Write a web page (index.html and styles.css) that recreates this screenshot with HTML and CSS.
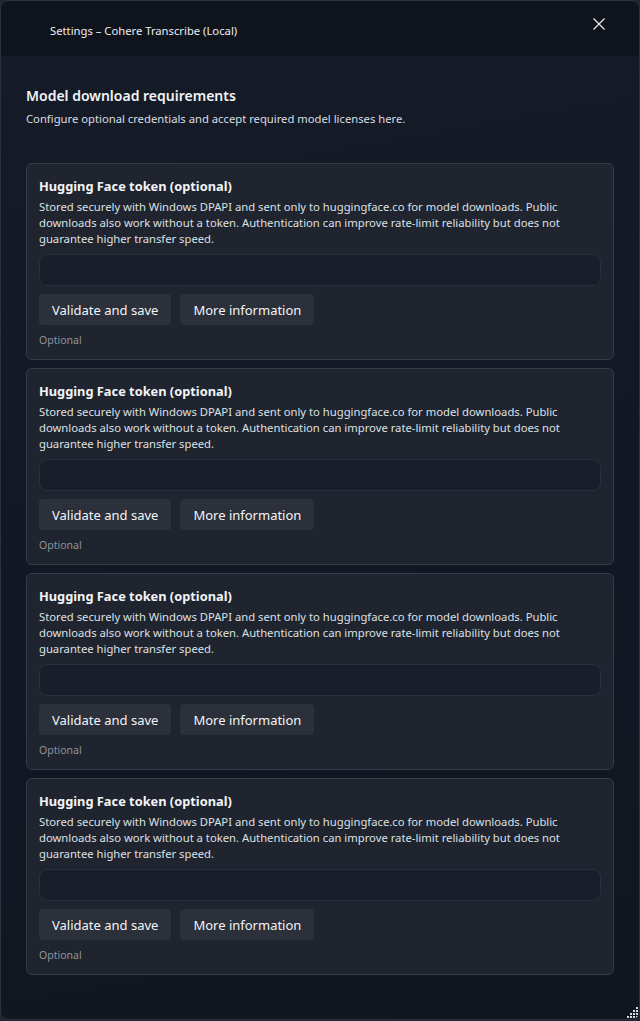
FILE: index.html
```html
<!DOCTYPE html>
<html lang="en">
<head>
<meta charset="utf-8">
<title>Settings – Cohere Transcribe (Local)</title>
<link rel="stylesheet" href="styles.css">
</head>
<body>
<div class="window">
  <header class="titlebar">
    <span class="title">Settings – Cohere Transcribe (Local)</span>
    <button class="close" aria-label="Close">
      <svg width="12" height="12" viewBox="0 0 12 12"><path d="M0.5 0.5L11.5 11.5M11.5 0.5L0.5 11.5" stroke="#e8eaee" stroke-width="1.2" fill="none"/></svg>
    </button>
  </header>
  <main class="content">
    <h1 class="heading">Model download requirements</h1>
    <p class="subtitle">Configure optional credentials and accept required model licenses here.</p>
    <div class="cards">
      <section class="card">
        <h2 class="card-title">Hugging Face token (optional)</h2>
        <p class="card-desc">Stored securely with Windows DPAPI and sent only to huggingface.co for model downloads. Public downloads also work without a token. Authentication can improve rate-limit reliability but does not guarantee higher transfer speed.</p>
        <div class="input"></div>
        <div class="actions"><button class="btn">Validate and save</button><button class="btn">More information</button></div>
        <div class="note">Optional</div>
      </section>
      <section class="card">
        <h2 class="card-title">Hugging Face token (optional)</h2>
        <p class="card-desc">Stored securely with Windows DPAPI and sent only to huggingface.co for model downloads. Public downloads also work without a token. Authentication can improve rate-limit reliability but does not guarantee higher transfer speed.</p>
        <div class="input"></div>
        <div class="actions"><button class="btn">Validate and save</button><button class="btn">More information</button></div>
        <div class="note">Optional</div>
      </section>
      <section class="card">
        <h2 class="card-title">Hugging Face token (optional)</h2>
        <p class="card-desc">Stored securely with Windows DPAPI and sent only to huggingface.co for model downloads. Public downloads also work without a token. Authentication can improve rate-limit reliability but does not guarantee higher transfer speed.</p>
        <div class="input"></div>
        <div class="actions"><button class="btn">Validate and save</button><button class="btn">More information</button></div>
        <div class="note">Optional</div>
      </section>
      <section class="card">
        <h2 class="card-title">Hugging Face token (optional)</h2>
        <p class="card-desc">Stored securely with Windows DPAPI and sent only to huggingface.co for model downloads. Public downloads also work without a token. Authentication can improve rate-limit reliability but does not guarantee higher transfer speed.</p>
        <div class="input"></div>
        <div class="actions"><button class="btn">Validate and save</button><button class="btn">More information</button></div>
        <div class="note">Optional</div>
      </section>
    </div>
  </main>
  <div class="grip" aria-hidden="true">
    <svg width="11" height="11" viewBox="0 0 11 11" fill="#d6dae2">
      <rect x="9" y="0" width="2" height="2"/>
      <rect x="6" y="3" width="2" height="2"/><rect x="9" y="3" width="2" height="2"/>
      <rect x="3" y="6" width="2" height="2"/><rect x="6" y="6" width="2" height="2"/><rect x="9" y="6" width="2" height="2"/>
      <rect x="0" y="9" width="2" height="2"/><rect x="3" y="9" width="2" height="2"/><rect x="6" y="9" width="2" height="2"/><rect x="9" y="9" width="2" height="2"/>
    </svg>
  </div>
</div>
</body>
</html>
```
FILE: styles.css
```css
* { box-sizing: border-box; }
html, body { margin: 0; padding: 0; }
body {
  background: #23262d;
  font-family: "Noto Sans", "Open Sans", sans-serif;
  color: #eef0f3;
  width: 640px;
  height: 1021px;
  overflow: hidden;
}
.window {
  position: relative;
  width: 640px;
  height: 1020px;
  border: 1px solid #2c323d;
  border-radius: 8px;
  overflow: hidden;
  display: flex;
  flex-direction: column;
  background: linear-gradient(170deg, #161c27 0%, #121823 60%, #111621 100%);
}
.titlebar {
  height: 55px;
  flex: none;
  background: #0f131b;
  display: flex;
  align-items: center;
  justify-content: space-between;
  padding: 0 34px 0 49px;
}
.title {
  font-size: 11.25px;
  color: #eceef2;
  margin-top: 3px;
}
.close {
  background: none;
  border: 0;
  padding: 0;
  width: 12px;
  height: 12px;
  display: flex;
  margin-top: -10px;
}
.content {
  padding: 30px 25px 0 25px;
}
.heading {
  margin: 0;
  font-size: 14px;
  font-weight: 600;
  line-height: 20px;
  color: #f2f4f7;
}
.subtitle {
  margin: 5px 0 0 0;
  font-size: 11.25px;
  line-height: 16px;
  color: #d9dde3;
}
.cards {
  margin-top: 36px;
  display: flex;
  flex-direction: column;
  gap: 8px;
}
.card {
  background: #1f242e;
  border: 1px solid #363c48;
  border-radius: 6px;
  padding: 12px 12px 12px 12px;
  display: flex;
  flex-direction: column;
  height: 197px;
}
.card-title {
  margin: 0;
  font-size: 12.8px;
  font-weight: 700;
  line-height: 20px;
  color: #f2f4f7;
}
.card-desc {
  margin: 3px 0 0 0;
  font-size: 11.25px;
  line-height: 16px;
  color: #dde0e5;
}
.input {
  margin-top: 7px;
  height: 32px;
  background: #181e2a;
  border: 1px solid #27303e;
  border-radius: 8px;
}
.actions {
  margin-top: 8px;
  display: flex;
  gap: 9px;
}
.btn {
  font-family: inherit;
  font-size: 13px;
  color: #f2f4f7;
  background: #2b303a;
  border: 0;
  border-radius: 4px;
  height: 31px;
  padding: 0 13px;
}
.note {
  margin-top: 8px;
  font-size: 10.5px;
  line-height: 14px;
  color: #8e939c;
}
.grip {
  position: absolute;
  right: 1px;
  bottom: 1px;
  width: 11px;
  height: 11px;
  display: flex;
}
```
